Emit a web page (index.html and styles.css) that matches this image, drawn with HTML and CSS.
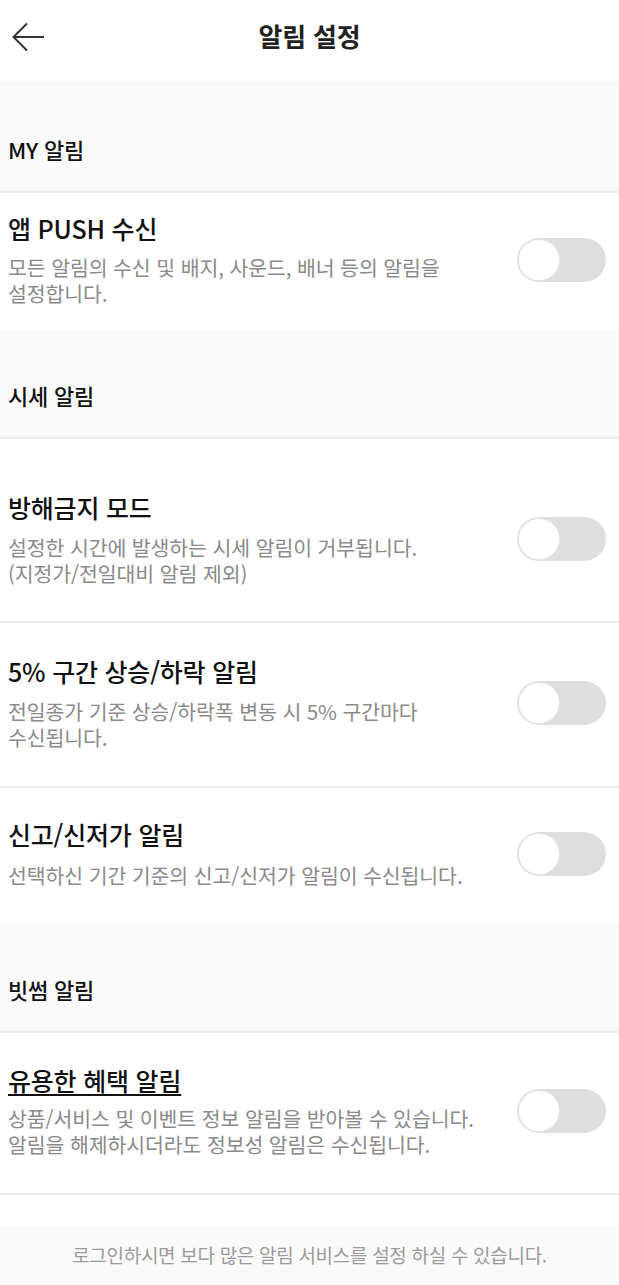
FILE: index.html
```html
<!DOCTYPE html>
<html lang="ko">
<head>
<meta charset="utf-8">
<title>알림 설정</title>
<link rel="stylesheet" href="styles.css">
</head>
<body>
<header class="topbar">
  <button class="back" type="button" aria-label="뒤로">
    <svg width="32" height="30" viewBox="0 0 32 30" aria-hidden="true">
      <path d="M1.5 15 H32 M15 1.5 L1.5 15 L15 28.5" fill="none" stroke="#333" stroke-width="2"/>
    </svg>
  </button>
  <h1 class="title">알림 설정</h1>
  <span class="spacer"></span>
</header>
<main>
  <div class="section-label">MY 알림</div>
  <div class="item item-first no-border">
    <div class="text">
      <div class="item-title">앱 PUSH 수신</div>
      <div class="item-desc">모든 알림의 수신 및 배지, 사운드, 배너 등의 알림을 설정합니다.</div>
    </div>
    <span class="toggle"><span class="knob"></span></span>
  </div>

  <div class="section-label">시세 알림</div>
  <div class="item item-tall">
    <div class="text">
      <div class="item-title">방해금지 모드</div>
      <div class="item-desc">설정한 시간에 발생하는 시세 알림이 거부됩니다. (지정가/전일대비 알림 제외)</div>
    </div>
    <span class="toggle"><span class="knob"></span></span>
  </div>
  <div class="item">
    <div class="text">
      <div class="item-title">5% 구간 상승/하락 알림</div>
      <div class="item-desc">전일종가 기준 상승/하락폭 변동 시 5% 구간마다 수신됩니다.</div>
    </div>
    <span class="toggle"><span class="knob"></span></span>
  </div>
  <div class="item item-single no-border">
    <div class="text">
      <div class="item-title">신고/신저가 알림</div>
      <div class="item-desc">선택하신 기간 기준의 신고/신저가 알림이 수신됩니다.</div>
    </div>
    <span class="toggle"><span class="knob"></span></span>
  </div>

  <div class="section-label">빗썸 알림</div>
  <div class="item item-link">
    <div class="text">
      <div class="item-title"><a class="title-link" href="#">유용한 혜택 알림</a></div>
      <div class="item-desc">상품/서비스 및 이벤트 정보 알림을 받아볼 수 있습니다. 알림을 해제하시더라도 정보성 알림은 수신됩니다.</div>
    </div>
    <span class="toggle"><span class="knob"></span></span>
  </div>

  <div class="gap"></div>
  <footer class="footer">로그인하시면 보다 많은 알림 서비스를 설정 하실 수 있습니다.</footer>
</main>
</body>
</html>
```

FILE: styles.css
```css
* { box-sizing: border-box; }
html, body { margin: 0; padding: 0; background: #fff; }
body {
  font-family: "Noto Sans CJK KR", "Noto Sans", sans-serif;
  color: #111;
  width: 619px;
  word-break: keep-all;
}
.topbar {
  display: grid;
  grid-template-columns: 1fr auto 1fr;
  align-items: start;
  height: 84px;
  border-bottom: 1px solid #f1f1f1;
}
.back {
  justify-self: start;
  margin: 22px 0 0 12px;
  padding: 0;
  border: 0;
  background: none;
  width: 32px;
  height: 30px;
  display: block;
}
.back svg { display: block; }
.title {
  margin: 18px 0 0;
  font-size: 26px;
  line-height: 36px;
  font-weight: 700;
  color: #222;
  letter-spacing: -0.2px;
}
.section-label {
  background: #fafafa;
  padding: 52px 8px 29px;
  font-size: 22px;
  line-height: 26px;
  font-weight: 500;
  color: #111;
  border-bottom: 2px solid #eeeeee;
  letter-spacing: -0.2px;
}
.item {
  display: flex;
  align-items: center;
  gap: 24px;
  padding: 33px 13px 36px 8px;
  border-bottom: 2px solid #eeeeee;
}
.item.no-border { border-bottom: 0; }
.item-first { padding-top: 20px; padding-bottom: 24px; }
.item-tall { padding-top: 53px; padding-bottom: 35px; }
.item-single { padding-top: 31px; padding-bottom: 36px; }
.item-link { padding-top: 32px; padding-bottom: 36px; }
.text { flex: 1; min-width: 0; }
.item-title {
  font-size: 25px;
  line-height: 30px;
  font-weight: 500;
  color: #111;
  letter-spacing: -0.2px;
}
.title-link {
  color: #111;
  text-decoration: underline;
  text-decoration-thickness: 2px;
  text-underline-offset: 3px;
}
.item-desc {
  margin-top: 12px;
  font-size: 20.5px;
  line-height: 26px;
  color: #8a8a8a;
  letter-spacing: -0.1px;
}
.item-first .item-desc { margin-top: 11px; }
.item-single .item-desc { margin-top: 13px; }
.item-link .item-desc { margin-top: 10px; }
.toggle {
  flex: none;
  position: relative;
  width: 89px;
  height: 44px;
  border-radius: 22px;
  background: #dedede;
}
.knob {
  position: absolute;
  left: 2px;
  top: 2px;
  width: 40px;
  height: 40px;
  border-radius: 50%;
  background: #fff;
  box-shadow: 0 0 0 1px #e6e6e6;
}
.gap { height: 31px; }
.footer {
  background: #fafafa;
  padding: 16px 0 40px;
  text-align: center;
  font-size: 19px;
  line-height: 26px;
  color: #9b9b9b;
  letter-spacing: -0.3px;
}
```
